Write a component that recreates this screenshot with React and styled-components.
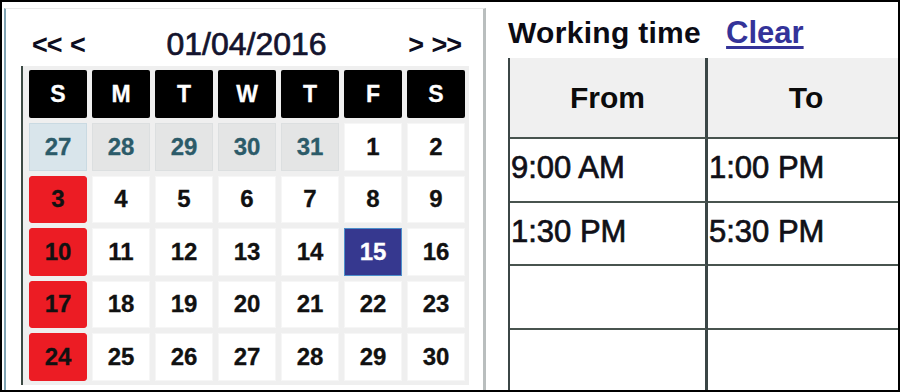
import React from "react";
import styled, { createGlobalStyle, css } from "styled-components";

const Global = createGlobalStyle`
  html, body { margin: 0; padding: 0; background: #fff; }
  body { font-family: "Liberation Sans", Arial, sans-serif; }
`;

const Frame = styled.div`
  width: 900px;
  height: 392px;
  box-sizing: border-box;
  border: 2px solid #000;
  background: #fff;
  overflow: hidden;
  display: flex;
  align-items: stretch;
`;

const CalendarPanel = styled.div`
  box-sizing: border-box;
  width: 482px;
  flex: none;
  margin: 6px 0 0 2px;
  border-left: 2px solid #7fa3b3;
  border-right: 3px solid #b9bebe;
  border-top: 1px solid #e8e8e8;
  background: #fff;
  display: flex;
  flex-direction: column;
`;

const NavRow = styled.div`
  margin-top: 19px;
  height: 32px;
  padding: 0 22px 0 26px;
  display: flex;
  align-items: center;
  justify-content: space-between;
  color: #111;
`;

const NavArrows = styled.span`
  font-weight: bold;
  font-size: 27px;
  line-height: 32px;
  padding-top: 2px;
  letter-spacing: -1px;
  word-spacing: 2px;
  color: #0d0d20;
`;

const DateTitle = styled.span`
  font-size: 32px;
  line-height: 32px;
  color: #14142e;
  -webkit-text-stroke: 0.7px #14142e;
`;

const GridWrap = styled.div`
  margin: 6px 0 0 15px;
  border-left: 2px solid #3c4a44;
  display: flex;
`;

const Grid = styled.div`
  background: #efefef;
  padding: 4px 4px 4px 6px;
  display: grid;
  grid-template-columns: repeat(7, 58px);
  grid-template-rows: 48px repeat(5, 47.5px);
  column-gap: 5px;
  row-gap: 5px;
`;

const HeadCell = styled.div`
  background: #000;
  color: #fff;
  border-radius: 2px;
  font-weight: bold;
  font-size: 23px;
  display: flex;
  align-items: center;
  justify-content: center;
  -webkit-text-stroke: 0.3px #fff;
`;

const variants = {
  normal: css`
    background: #fff;
    color: #111;
    border-color: #f6f6f6;
  `,
  prev: css`
    background: #e4e5e5;
    color: #2c5b69;
    border-color: #dcdfe0;
  `,
  prevSunday: css`
    background: #d9e5eb;
    color: #2c5b69;
    border-color: #cadae2;
  `,
  holiday: css`
    background: #ec1c24;
    color: #111;
    border-color: #ec1c24;
    border-radius: 3px;
  `,
  selected: css`
    background: #36388f;
    color: #fff;
    border-color: #4d8fcb;
  `,
};

const DayCell = styled.div`
  box-sizing: border-box;
  border: 1px solid transparent;
  font-weight: bold;
  font-size: 24px;
  display: flex;
  align-items: center;
  justify-content: center;
  -webkit-text-stroke: 0.3px currentColor;
  ${(p) => variants[p.$variant || "normal"]}
`;

const RightSection = styled.div`
  margin-left: 22px;
  flex: 1;
  display: flex;
  flex-direction: column;
  min-width: 0;
`;

const TitleRow = styled.div`
  margin-top: 16px;
  height: 30px;
  display: flex;
  align-items: center;
  gap: 25px;
  white-space: nowrap;
`;

const Title = styled.span`
  font-weight: bold;
  font-size: 30px;
  line-height: 30px;
  color: #0b0b14;
  letter-spacing: 0.3px;
`;

const ClearLink = styled.a`
  font-weight: bold;
  font-size: 31px;
  line-height: 30px;
  color: #343399;
  text-decoration: underline;
  text-decoration-thickness: 3px;
  text-underline-offset: 3px;
  cursor: pointer;
`;

const Table = styled.div`
  margin-top: 10px;
  border-left: 2px solid #3b4646;
  display: grid;
  grid-template-columns: 198px 196px;
  grid-template-rows: 81px repeat(4, 63.5px);
`;

const Cell = styled.div`
  box-sizing: border-box;
  border-bottom: 2px solid #48544f;
  border-right: ${(p) => (p.$first ? "3px solid #3b4646" : "none")};
  display: flex;
  align-items: center;
  ${(p) =>
    p.$head
      ? css`
          background: #f0f0f0;
          justify-content: center;
          font-weight: bold;
          font-size: 30px;
          color: #0b0b0b;
        `
      : css`
          background: #fff;
          justify-content: flex-start;
          padding-left: 1px;
          padding-bottom: 3px;
          font-size: 31px;
          color: #101018;
          -webkit-text-stroke: 0.7px #101018;
        `}
`;

const heads = ["S", "M", "T", "W", "T", "F", "S"];

const days = [
  [27, "prevSunday"], [28, "prev"], [29, "prev"], [30, "prev"], [31, "prev"], [1], [2],
  [3, "holiday"], [4], [5], [6], [7], [8], [9],
  [10, "holiday"], [11], [12], [13], [14], [15, "selected"], [16],
  [17, "holiday"], [18], [19], [20], [21], [22], [23],
  [24, "holiday"], [25], [26], [27], [28], [29], [30],
];

const rows = [
  ["9:00 AM", "1:00 PM"],
  ["1:30 PM", "5:30 PM"],
  ["", ""],
  ["", ""],
];

export default function App() {
  return (
    <>
      <Global />
      <Frame>
        <CalendarPanel>
          <NavRow>
            <NavArrows>{"<< <"}</NavArrows>
            <DateTitle>01/04/2016</DateTitle>
            <NavArrows>{"> >>"}</NavArrows>
          </NavRow>
          <GridWrap>
            <Grid>
              {heads.map((h, i) => (
                <HeadCell key={"h" + i}>{h}</HeadCell>
              ))}
              {days.map(([d, v], i) => (
                <DayCell key={"d" + i} $variant={v}>
                  {d}
                </DayCell>
              ))}
            </Grid>
          </GridWrap>
        </CalendarPanel>
        <RightSection>
          <TitleRow>
            <Title>Working time</Title>
            <ClearLink>Clear</ClearLink>
          </TitleRow>
          <Table>
            <Cell $head $first>From</Cell>
            <Cell $head>To</Cell>
            {rows.map((r, i) => (
              <React.Fragment key={i}>
                <Cell $first>{r[0]}</Cell>
                <Cell>{r[1]}</Cell>
              </React.Fragment>
            ))}
          </Table>
        </RightSection>
      </Frame>
    </>
  );
}
